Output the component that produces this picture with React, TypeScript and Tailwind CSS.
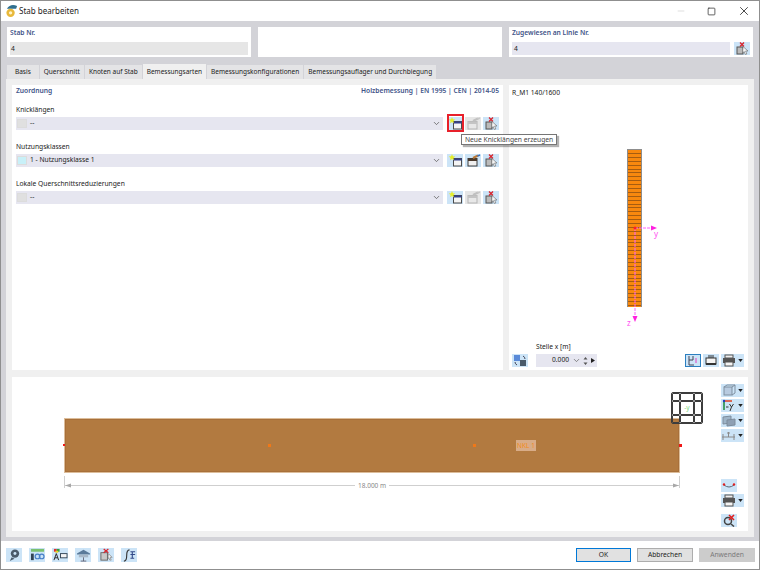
import type { ReactNode } from "react";
import { ChevronDown, Minus, Square, X } from "lucide-react";

const font = "font-['Noto_Sans',sans-serif]";

function IconBtn({ children, tone = "blue", className = "" }: { children: ReactNode; tone?: "blue" | "gray"; className?: string }) {
  return (
    <div className={`w-[16px] h-[13px] flex items-center justify-center shrink-0 ${tone === "blue" ? "bg-[#cce4f7]" : "bg-[#e6e6e6]"} ${className}`}>
      <svg width="15" height="13" viewBox="0 0 15 13">
        {children}
      </svg>
    </div>
  );
}

const NewIcon = () => (
  <>
    <rect x="5.5" y="4.5" width="8" height="7.5" fill="#f4f4f4" stroke="#4a4a4a" />
    <rect x="5.5" y="4.5" width="8" height="2" fill="#34408c" />
    <path d="M4 0l0.9 2.2 2.3 0.2-1.8 1.5 0.6 2.3-2-1.2-2 1.2 0.6-2.3-1.8-1.5 2.3-0.2z" fill="#e6ee28" />
  </>
);

const EditIcon = ({ on }: { on: boolean }) => (
  <>
    <rect x="2" y="4.5" width="9" height="7.5" fill={on ? "#f0f0f0" : "#e8e8e8"} stroke={on ? "#3c3c3c" : "#b5b5b5"} />
    <rect x="2" y="4.5" width="9" height="2.5" fill={on ? "#4a3a2c" : "#c4c4c4"} />
    <path d="M7 4L12 1.5" stroke={on ? "#b9793a" : "#c0c0c0"} strokeWidth="2" />
    <path d="M11.5 2l2.5-1" stroke={on ? "#3a6fc0" : "#c8c8c8"} strokeWidth="1.5" />
  </>
);

const DeleteIcon = () => (
  <>
    <rect x="2" y="5" width="6" height="7" fill="#bbb" stroke="#555" />
    <path d="M5 0.5l4 4M9 0.5l-4 4" stroke="#d8242c" strokeWidth="1.3" />
    <path d="M8 4.5l5 4.5-2.4 0 1.2 3-1.5 0.5-1.2-3-1.6 1.6z" fill="#f4f4f4" stroke="#666" strokeWidth="0.6" />
  </>
);

function Selector({ label, value, swatch, editOn, highlight }: { label: string; value: string; swatch: string; editOn: boolean; highlight?: boolean }) {
  return (
    <div className="flex flex-col">
      <div className="text-[6.7px] leading-[13px] text-[#222] mb-[1px] pt-[1px]">{label}</div>
      <div className="flex items-center">
        <div className="w-[428px] h-[13px] bg-[#e6e6f0] flex items-center pl-[1px] pr-[2px]">
          <div className="w-[10px] h-[9px] mr-[3px] border border-[#dcdcdc]" style={{ background: swatch }} />
          <span className="text-[6.7px] text-[#222] flex-1">{value}</span>
          <ChevronDown size={9} className="text-[#555]" />
        </div>
        <div className="ml-[4px] relative">
          <IconBtn><NewIcon /></IconBtn>
          {highlight && <div className="absolute -inset-x-[0.5px] -top-[3.5px] -bottom-[1.5px] border-2 border-[#e8202a]" />}
        </div>
        <IconBtn tone={editOn ? "blue" : "gray"} className="ml-[2px]"><EditIcon on={editOn} /></IconBtn>
        <IconBtn className="ml-[2px]"><DeleteIcon /></IconBtn>
      </div>
    </div>
  );
}

function Tab({ label, active, wide }: { label: string; active?: boolean; wide?: boolean }) {
  return (
    <div className={`flex items-center text-[6.5px] text-[#222] mr-[1px] whitespace-nowrap ${wide ? "px-[8px]" : "px-[4px]"} ${active ? "bg-[#f0f0f0] h-[15px]" : "bg-[#e4e4e6] h-[14px]"}`}>
      {label}
    </div>
  );
}

function ViewBtn({ children }: { children: ReactNode }) {
  return (
    <div className="w-[23px] h-[13px] bg-[#cce4f7] flex items-center pl-[1px]">
      <svg width="14" height="13" viewBox="0 0 14 13">{children}</svg>
      <svg width="5" height="3" viewBox="0 0 6 4" className="ml-[2px]"><path d="M0 0h6L3 4z" fill="#222" /></svg>
    </div>
  );
}

const Printer = () => (
  <>
    <rect x="3" y="1" width="8" height="3" fill="#eee" stroke="#555" />
    <rect x="1" y="4" width="12" height="5" fill="#555" />
    <rect x="3" y="8" width="8" height="4" fill="#f4f4f4" stroke="#555" />
  </>
);

function Beam() {
  const bands = Array.from({ length: 40 }, (_, i) => i);
  return (
    <div className="relative flex-1">
      <div className="absolute left-[115px] top-[51px] w-[15px] h-[158px] bg-[#f8880e] border-x border-t border-[#8d8d8d] overflow-hidden pt-[3px]">
        {bands.map((i) => (
          <div key={i} className="h-[1px] bg-[#a65c10] mb-[2.9px]" />
        ))}
      </div>
      <svg className="absolute left-[100px] top-[121px]" width="50" height="110" viewBox="0 0 50 110">
        <path d="M23 9H39" stroke="#ff60ff" strokeWidth="1" strokeDasharray="3 1" />
        <path d="M45 9l-6-2.5v5z" fill="#ff20e0" />
        <path d="M23 9V97" stroke="#ff60ff" strokeWidth="1" strokeDasharray="3 1" />
        <path d="M23 103l-2.5-6h5z" fill="#ff20e0" />
        <circle cx="23" cy="9" r="1.5" fill="#ff2020" />
      </svg>
      <span className="absolute left-[142px] top-[131px] text-[8px] leading-[10px] text-[#ff50f0]">y</span>
      <span className="absolute left-[115px] top-[220px] text-[8px] leading-[10px] text-[#ff50f0]">z</span>
    </div>
  );
}

function MemberCanvas() {
  return (
    <div className="relative flex-1">
      <div className="absolute left-[52px] top-[41px] w-[616px] h-[55px] bg-[#b27a40] border border-[#dcbd9a] shadow-[inset_0_0_0_1px_#a8703a]" />
      <div className="absolute left-[51px] top-[67px] w-[2px] h-[2px] bg-[#f01818]" />
      <div className="absolute left-[667px] top-[67px] w-[3px] h-[3px] bg-[#f01818]" />
      <div className="absolute left-[256px] top-[67px] w-[3px] h-[3px] bg-[#f07818]" />
      <div className="absolute left-[461px] top-[67px] w-[3px] h-[3px] bg-[#f07818]" />
      <div className="absolute left-[504px] top-[63px] w-[20px] h-[11px] bg-[#d8ac88] text-[6.5px] leading-[11px] text-[#f28a20] text-center whitespace-nowrap">NKL 1</div>
      <div className="absolute left-[52px] top-[108px] w-[616px] h-[1px] bg-[#cfcfcf]" />
      <div className="absolute left-[52px] top-[99px] w-[1px] h-[12px] bg-[#cfcfcf]" />
      <div className="absolute left-[667px] top-[99px] w-[1px] h-[12px] bg-[#cfcfcf]" />
      <svg className="absolute left-[53px] top-[106px]" width="6" height="5" viewBox="0 0 6 5"><path d="M0 2.5L6 0.5v4z" fill="#a8a8a8" /></svg>
      <svg className="absolute left-[661px] top-[106px]" width="6" height="5" viewBox="0 0 6 5"><path d="M6 2.5L0 0.5v4z" fill="#a8a8a8" /></svg>
      <div className="absolute left-[343px] top-[103px] bg-white px-[3px] text-[6.5px] leading-[11px] text-[#888]">18.000 m</div>
      <div className="absolute left-[659px] top-[15px] w-[32px] h-[32px] grid grid-cols-[8px_14px_8px] grid-rows-[8px_14px_8px] border border-[#3c3c3c] rounded-[2px]">
        {["", "", "", "", "-y", "", "", "", ""].map((t, i) => (
          <div key={i} className="border border-[#3c3c3c] rounded-[1px] text-[6.5px] leading-[12px] text-center text-[#7cd87c]">{t}</div>
        ))}
      </div>
      <div className="absolute right-[4px] top-[7px] flex flex-col items-start">
        <div className="flex flex-col gap-[2px]">
          <ViewBtn>
            <rect x="2" y="3" width="8" height="8" fill="#b8cbe0" stroke="#7f8fa0" />
            <path d="M2 3l3-2h8v8l-3 2M10 3l3-2" fill="none" stroke="#7f8fa0" />
          </ViewBtn>
          <ViewBtn>
            <path d="M2 2V11" stroke="#1a8a3a" strokeWidth="1.5" />
            <path d="M2 2H10" stroke="#e04020" strokeWidth="1.5" />
            <circle cx="2" cy="2" r="1.2" fill="#2040c0" />
            <path d="M4 8h2.5M7.5 5l2 3 2-3M9.5 8L8 12" stroke="#333" fill="none" />
          </ViewBtn>
          <ViewBtn>
            <path d="M1 3l8-1v7l-8 1z" fill="#9eb4c8" stroke="#7c8c9c" />
            <path d="M5 6l8-1v6l-8 1z" fill="#8ea0b4" stroke="#7c8c9c" />
          </ViewBtn>
          <ViewBtn>
            <path d="M0 8H13M1 5V11M12 5V11M6.5 3V8M5 4h3" stroke="#8a8a8a" fill="none" />
          </ViewBtn>
        </div>
        <div className="w-[16px] h-[13px] bg-[#cce4f7] mt-[37px] flex items-center justify-center">
          <svg width="14" height="13" viewBox="0 0 14 13">
            <path d="M2 6q5 4 10 0" stroke="#5a6a7a" strokeWidth="1" fill="none" />
            <circle cx="2" cy="5.5" r="1.2" fill="#e02020" />
            <circle cx="12" cy="5.5" r="1.2" fill="#e02020" />
          </svg>
        </div>
        <div className="mt-[2px]"><ViewBtn><Printer /></ViewBtn></div>
        <div className="w-[16px] h-[13px] bg-[#cce4f7] mt-[7px] flex items-center justify-center">
          <svg width="14" height="13" viewBox="0 0 14 13">
            <circle cx="6" cy="7" r="3.5" fill="none" stroke="#444" strokeWidth="1.5" />
            <path d="M9 10l3 2.5" stroke="#444" strokeWidth="1.5" />
            <path d="M7 1l5 5M12 1L7 6" stroke="#e02020" strokeWidth="1.6" />
          </svg>
        </div>
      </div>
    </div>
  );
}

const footerIcons: ReactNode[] = [
  <>
    <circle cx="8.5" cy="6" r="4.5" fill="#4a5a6a" />
    <path d="M5 10l-2 4 5-2.5z" fill="#4a5a6a" />
    <circle cx="8.5" cy="6" r="1.6" fill="#cce4f7" />
  </>,
  <>
    <rect x="1" y="1" width="14" height="3" fill="#7ac070" />
    <rect x="1" y="6" width="3" height="7" fill="#345" />
    <circle cx="8" cy="9" r="2.5" fill="none" stroke="#4a80c8" strokeWidth="1.3" />
    <circle cx="12.5" cy="9" r="2.5" fill="none" stroke="#4a80c8" strokeWidth="1.3" />
  </>,
  <>
    <rect x="1" y="1" width="3" height="3" fill="#e03030" />
    <rect x="4" y="1" width="3" height="3" fill="#30a040" />
    <rect x="2.5" y="3" width="3" height="2" fill="#e8d020" />
    <path d="M1 13l2.5-7 2.5 7M2 10.5h3" stroke="#222" fill="none" />
    <rect x="8" y="6" width="7" height="4.5" fill="#f4f4f4" stroke="#345" />
  </>,
  <>
    <path d="M1 6l7-4 7 4v1H1z" fill="#5a7a9a" />
    <rect x="3" y="7" width="10" height="3" fill="#a8b8c8" />
    <path d="M8 10v4M5 14h6" stroke="#667" />
  </>,
  <>
    <rect x="2" y="5" width="7" height="8" fill="#c8c8c8" stroke="#666" />
    <path d="M5 1l5 4M10 1L5 5" stroke="#d8242c" strokeWidth="1.3" />
    <path d="M10 6l4 4-2 0 1 3-1.5 0-1-2.5-1 1z" fill="#f4f4f4" stroke="#666" strokeWidth="0.6" />
  </>,
  <>
    <path d="M2 14q3 0 3-6t3-6" stroke="#333" fill="none" strokeWidth="1.2" />
    <path d="M9 4h5M9 7h5M11 4v7M9 11h4" stroke="#334a8a" strokeWidth="1.2" fill="none" />
  </>,
];

export default function App() {
  return (
    <div className={`w-[760px] h-[570px] bg-[#d3d3d8] border border-[#8f8f8f] flex flex-col overflow-hidden relative ${font}`}>
      <div className="h-[20px] bg-white flex items-center shrink-0 pl-[4px]">
        <svg width="13" height="14" viewBox="0 0 14 15">
          <path d="M2 5q4-6 11-3l-1 3z" fill="#2f6f8f" />
          <circle cx="6" cy="9.5" r="4.5" fill="#e8b83a" />
          <circle cx="6" cy="9.5" r="1.8" fill="#fff3c8" />
        </svg>
        <span className="text-[8px] text-[#222] ml-[1px] flex-1">Stab bearbeiten</span>
        <Minus size={10} className="text-[#d8d8d8] mr-[21px]" />
        <Square size={9} className="text-[#333] mr-[21px]" />
        <X size={14} strokeWidth={1.5} className="text-[#333] mr-[8px]" />
      </div>

      <div className="flex gap-[7px] pl-[6px] pt-[6px] shrink-0">
        <div className="w-[244px] h-[30px] bg-white px-[3px]">
          <div className="text-[6.7px] leading-[11px] font-semibold text-[#3f5488]">Stab Nr.</div>
          <div className="h-[13px] mt-[4px] bg-[#e6e6e6] text-[6.7px] leading-[13px] pl-[1px] text-[#222]">4</div>
        </div>
        <div className="w-[244px] h-[30px] bg-white" />
        <div className="w-[244px] h-[30px] bg-white px-[3px]">
          <div className="text-[6.7px] leading-[11px] font-semibold text-[#3f5488]">Zugewiesen an Linie Nr.</div>
          <div className="flex items-center mt-[4px]">
            <div className="w-[219px] h-[13px] bg-[#e6e6f0] text-[6.7px] leading-[13px] pl-[2px] text-[#222]">4</div>
            <IconBtn className="ml-[4px]"><DeleteIcon /></IconBtn>
          </div>
        </div>
      </div>

      <div className="flex items-end pl-[6px] shrink-0 h-[22px]">
        <Tab label="Basis" wide />
        <Tab label="Querschnitt" />
        <Tab label="Knoten auf Stab" />
        <Tab label="Bemessungsarten" active />
        <Tab label="Bemessungskonfigurationen" />
        <Tab label="Bemessungsauflager und Durchbiegung" />
      </div>

      <div className="mx-[5px] h-[458px] bg-[#f0f0f0] shrink-0 px-[6px] pt-[6px] flex flex-col">
        <div className="h-[285px] flex gap-[6px] shrink-0">
          <div className="w-[491px] bg-white pl-[4px] pr-[4px]">
            <div className="flex justify-between text-[6.7px] leading-[11px] font-semibold text-[#3f5488]">
              <span>Zuordnung</span>
              <span>Holzbemessung | EN 1995 | CEN | 2014-05</span>
            </div>
            <div className="flex flex-col gap-[9px] mt-[6px]">
              <Selector label="Knicklängen" value="--" swatch="#e0e0e0" editOn={false} highlight />
              <Selector label="Nutzungsklassen" value="1 - Nutzungsklasse 1" swatch="#c8f0f8" editOn />
              <Selector label="Lokale Querschnittsreduzierungen" value="--" swatch="#e0e0e0" editOn={false} />
            </div>
          </div>
          <div className="w-[239px] bg-white flex flex-col pl-[3px] pt-[2px] pr-[4px] pb-[3px]">
            <div className="text-[6.7px] leading-[11px] text-[#222]">R_M1 140/1600</div>
            <Beam />
            <div className="flex items-end">
              <div className="w-[16px] h-[13px] bg-[#cce4f7] flex items-center justify-center">
                <svg width="14" height="13" viewBox="0 0 14 13">
                  <rect x="1" y="1" width="6" height="6" fill="#5a8ad8" />
                  <rect x="7" y="6" width="6" height="6" fill="#4a5a6a" />
                  <path d="M10 2q2 1 2 3M4 11q-2-1-2-3" stroke="#445" fill="none" />
                </svg>
              </div>
              <div className="ml-[8px]">
                <div className="text-[6.7px] leading-[11px] text-[#222] mb-[2px]">Stelle x [m]</div>
                <div className="w-[61px] h-[13px] bg-[#e6e6f0] flex items-center text-[6.7px] text-[#222] pl-[16px]">
                  <span>0.000</span>
                  <ChevronDown size={9} className="text-[#666] ml-[3px]" />
                  <svg width="5" height="8" viewBox="0 0 5 8" className="ml-[2px]"><path d="M2.5 0L4.5 2.5H0.5zM2.5 8L0.5 5.5H4.5z" fill="#555" /></svg>
                  <svg width="4" height="5" viewBox="0 0 4 5" className="ml-[3px]"><path d="M0 0L4 2.5 0 5z" fill="#222" /></svg>
                </div>
              </div>
              <div className="flex-1" />
              <div className="w-[16px] h-[13px] bg-[#cce4f7] border border-[#2c7fc0] flex items-center justify-center">
                <svg width="12" height="11" viewBox="0 0 12 11">
                  <path d="M2 1V10H7M2 5h4V1" stroke="#445" fill="none" />
                  <path d="M9 3v5" stroke="#e040c0" />
                </svg>
              </div>
              <div className="w-[16px] h-[13px] bg-[#cce4f7] ml-[2px] flex items-center justify-center">
                <svg width="14" height="13" viewBox="0 0 14 13">
                  <rect x="2" y="4" width="10" height="6" fill="#f4f4f4" stroke="#333" />
                  <rect x="2" y="9" width="10" height="2" fill="#333" />
                  <path d="M5 1v3M7 1v3M9 1v3" stroke="#333" />
                </svg>
              </div>
              <div className="ml-[2px]"><ViewBtn><Printer /></ViewBtn></div>
            </div>
          </div>
        </div>

        <div className="h-[154px] bg-white flex mt-[7px] shrink-0">
          <MemberCanvas />
        </div>
      </div>

      <div className="h-[4px] shrink-0" />

      <div className="flex-1 bg-white flex items-center pl-[5px] pr-[4px]">
        <div className="flex gap-[7px] flex-1">
          {footerIcons.map((icon, i) => (
            <div key={i} className="w-[16px] h-[14px] bg-[#cce4f7] flex items-center justify-center">
              <svg width="15" height="14" viewBox="0 0 16 15">{icon}</svg>
            </div>
          ))}
        </div>
        <div className="w-[55px] h-[14px] bg-[#e1e1e1] border-[1.5px] border-[#0078d7] text-[6.7px] leading-[11px] text-center text-[#222]">OK</div>
        <div className="w-[56px] h-[14px] bg-[#e1e1e1] border border-[#adadad] ml-[6px] text-[6.7px] leading-[12px] text-center text-[#222]">Abbrechen</div>
        <div className="w-[56px] h-[14px] bg-[#cccccc] ml-[6px] text-[6.7px] leading-[14px] text-center text-[#7a7a7a]">Anwenden</div>
      </div>

      <div className="absolute left-[460px] top-[133px] h-[11px] px-[3px] bg-white border border-[#767676] shadow-[2px_2px_1px_rgba(0,0,0,0.3)] text-[6.7px] leading-[9px] text-[#444] whitespace-nowrap">
        Neue Knicklängen erzeugen
      </div>
    </div>
  );
}
